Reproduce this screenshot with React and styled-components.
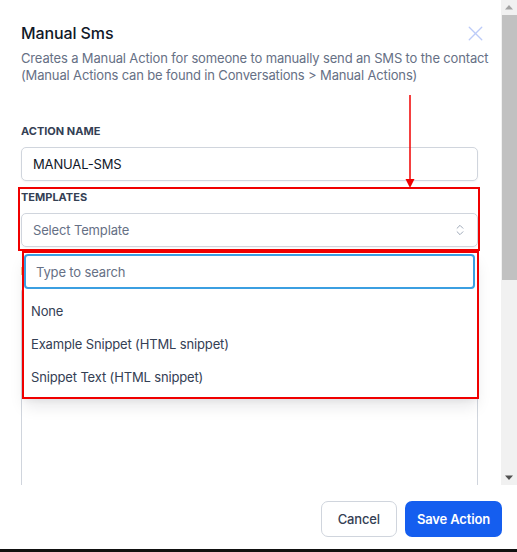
import React from "react";
import styled, { createGlobalStyle } from "styled-components";
import { X, ChevronsUpDown } from "lucide-react";

const GlobalStyle = createGlobalStyle`
  html, body {
    margin: 0;
    padding: 0;
    background: #ffffff;
    overflow: hidden;
  }
  * {
    box-sizing: border-box;
  }
`;

const options = [
  "None",
  "Example Snippet (HTML snippet)",
  "Snippet Text (HTML snippet)",
];

const ScrollArrow = ({ down }) => (
  <ArrowButton>
    <svg width="16" height="15" viewBox="0 0 16 15">
      {down ? (
        <polygon points="4,5.5 12,5.5 8,10" fill="#505050" />
      ) : (
        <polygon points="4,9.5 12,9.5 8,5" fill="#a3a3a3" />
      )}
    </svg>
  </ArrowButton>
);

const App = () => {
  return (
    <>
      <GlobalStyle />
      <Modal>
        <Body>
          <ScrollView>
            <Content>
              <Header>
                <Title>Manual Sms</Title>
                <CloseButton>
                  <X size={25} strokeWidth={1.3} />
                </CloseButton>
              </Header>
              <Description>
                Creates a Manual Action for someone to manually send an SMS to
                the contact (Manual Actions can be found in Conversations &gt;
                Manual Actions)
              </Description>

              <Field $top={39}>
                <Label>Action Name</Label>
                <Input value="MANUAL-SMS" readOnly />
              </Field>

              <Field $top={8}>
                <Label>Templates</Label>
                <Select>
                  <Placeholder>Select Template</Placeholder>
                  <ChevronsUpDown size={14} color="#98a2b3" strokeWidth={1.6} />
                </Select>
                <Highlight />
                <Dropdown>
                  <Search placeholder="Type to search" autoFocus />
                  <OptionList>
                    {options.map((o) => (
                      <Option key={o}>{o}</Option>
                    ))}
                  </OptionList>
                </Dropdown>
              </Field>

              <Field $top={16}>
                <Label>Message</Label>
                <TextArea />
              </Field>

              <Arrow width="12" height="94" viewBox="0 0 12 94">
                <line x1="6" y1="0" x2="6" y2="86" stroke="#f00000" strokeWidth="1.5" />
                <polygon points="1.5,84 10.5,84 6,93" fill="#f00000" />
              </Arrow>
            </Content>
          </ScrollView>
          <Scrollbar>
            <ScrollArrow />
            <Track>
              <Thumb />
            </Track>
            <ScrollArrow down />
          </Scrollbar>
        </Body>
        <Footer>
          <SecondaryButton>Cancel</SecondaryButton>
          <PrimaryButton>Save Action</PrimaryButton>
        </Footer>
      </Modal>
    </>
  );
};

export default App;

const Modal = styled.div`
  width: 517px;
  height: 552px;
  display: flex;
  flex-direction: column;
  background: #ffffff;
  border-bottom: 3px solid #111111;
  font-family: Inter, "Noto Sans", sans-serif;
`;

const Body = styled.div`
  height: 485px;
  display: flex;
`;

const ScrollView = styled.div`
  flex: 1;
  overflow: hidden;
`;

const Scrollbar = styled.div`
  width: 16px;
  display: flex;
  flex-direction: column;
  background: #f1f1f1;
`;

const ArrowButton = styled.div`
  height: 15px;
  display: flex;
  align-items: center;
  justify-content: center;
`;

const Track = styled.div`
  flex: 1;
  padding: 0 0 0 1px;
`;

const Thumb = styled.div`
  height: 265px;
  background: #c1c1c1;
`;

const Content = styled.div`
  position: relative;
  padding: 19px 23px 40px 21px;
  display: flex;
  flex-direction: column;
`;

const Header = styled.div`
  display: flex;
  justify-content: space-between;
  align-items: center;
  height: 28px;
`;

const Title = styled.h2`
  margin: 0;
  font-size: 16px;
  font-weight: 500;
  letter-spacing: -0.1px;
  color: #101828;
`;

const CloseButton = styled.div`
  display: flex;
  align-items: center;
  color: #bccbf8;
  margin-right: -10px;
`;

const Description = styled.p`
  margin: 3px 0 0;
  font-size: 13px;
  line-height: 17px;
  letter-spacing: -0.15px;
  color: #667085;
  width: 470px;
`;

const Field = styled.div`
  position: relative;
  margin-top: ${(p) => p.$top}px;
  display: flex;
  flex-direction: column;
  gap: 8px;
`;

const Label = styled.label`
  font-size: 11px;
  line-height: 16px;
  font-weight: 700;
  text-transform: uppercase;
  color: #344054;
`;

const Input = styled.input`
  height: 34px;
  width: 100%;
  border: 1px solid #d0d5dd;
  border-radius: 5px;
  padding: 0 11px;
  font-family: inherit;
  font-size: 13px;
  letter-spacing: -0.15px;
  color: #101828;
  outline: none;
  box-shadow: 0 1px 2px rgba(16, 24, 40, 0.05);
`;

const Select = styled.div`
  height: 34px;
  display: flex;
  align-items: center;
  justify-content: space-between;
  border: 1px solid #d0d5dd;
  border-radius: 5px;
  padding: 0 10px 0 11px;
  box-shadow: 0 1px 2px rgba(16, 24, 40, 0.05);
`;

const Placeholder = styled.span`
  font-size: 13px;
  letter-spacing: -0.15px;
  color: #667085;
`;

const Highlight = styled.div`
  position: absolute;
  top: -2px;
  left: -3px;
  right: -2px;
  bottom: -4px;
  border: 2px solid #f00000;
  pointer-events: none;
`;

const Dropdown = styled.div`
  position: absolute;
  top: 62px;
  left: 1px;
  width: 457px;
  height: 148px;
  background: #ffffff;
  border: 2px solid #f00000;
  padding: 1px 2px 0 0;
  box-shadow: 0 10px 15px -3px rgba(16, 24, 40, 0.1),
    0 4px 6px -2px rgba(16, 24, 40, 0.05);
  z-index: 2;
`;

const Search = styled.input`
  width: 100%;
  height: 35px;
  border: 2px solid #3b9fe1;
  border-radius: 4px;
  padding: 0 10px;
  font-family: inherit;
  font-size: 13px;
  letter-spacing: -0.15px;
  color: #101828;
  outline: none;
  caret-color: #101828;
  &::placeholder {
    color: #667085;
  }
`;

const OptionList = styled.ul`
  list-style: none;
  margin: 0;
  padding: 5px 0 0;
`;

const Option = styled.li`
  height: 33px;
  display: flex;
  align-items: center;
  padding-left: 7px;
  font-size: 13px;
  letter-spacing: -0.15px;
  color: #344054;
`;

const TextArea = styled.textarea`
  height: 480px;
  width: 100%;
  border: 1px solid #d0d5dd;
  border-radius: 5px;
  resize: none;
  outline: none;
`;

const Arrow = styled.svg`
  position: absolute;
  left: 404px;
  top: 95px;
`;

const Footer = styled.div`
  flex: 1;
  display: flex;
  justify-content: flex-end;
  align-items: flex-start;
  gap: 8px;
  padding: 16px 15px 0 0;
`;

const SecondaryButton = styled.button`
  height: 36px;
  padding: 0 16px;
  border: 1px solid #d0d5dd;
  border-radius: 7px;
  background: #ffffff;
  font-family: inherit;
  font-size: 13px;
  font-weight: 500;
  letter-spacing: -0.15px;
  color: #344054;
`;

const PrimaryButton = styled.button`
  height: 36px;
  padding: 0 12px;
  border: none;
  border-radius: 7px;
  background: #155eef;
  font-family: inherit;
  font-size: 13px;
  font-weight: 600;
  letter-spacing: -0.15px;
  color: #ffffff;
`;
